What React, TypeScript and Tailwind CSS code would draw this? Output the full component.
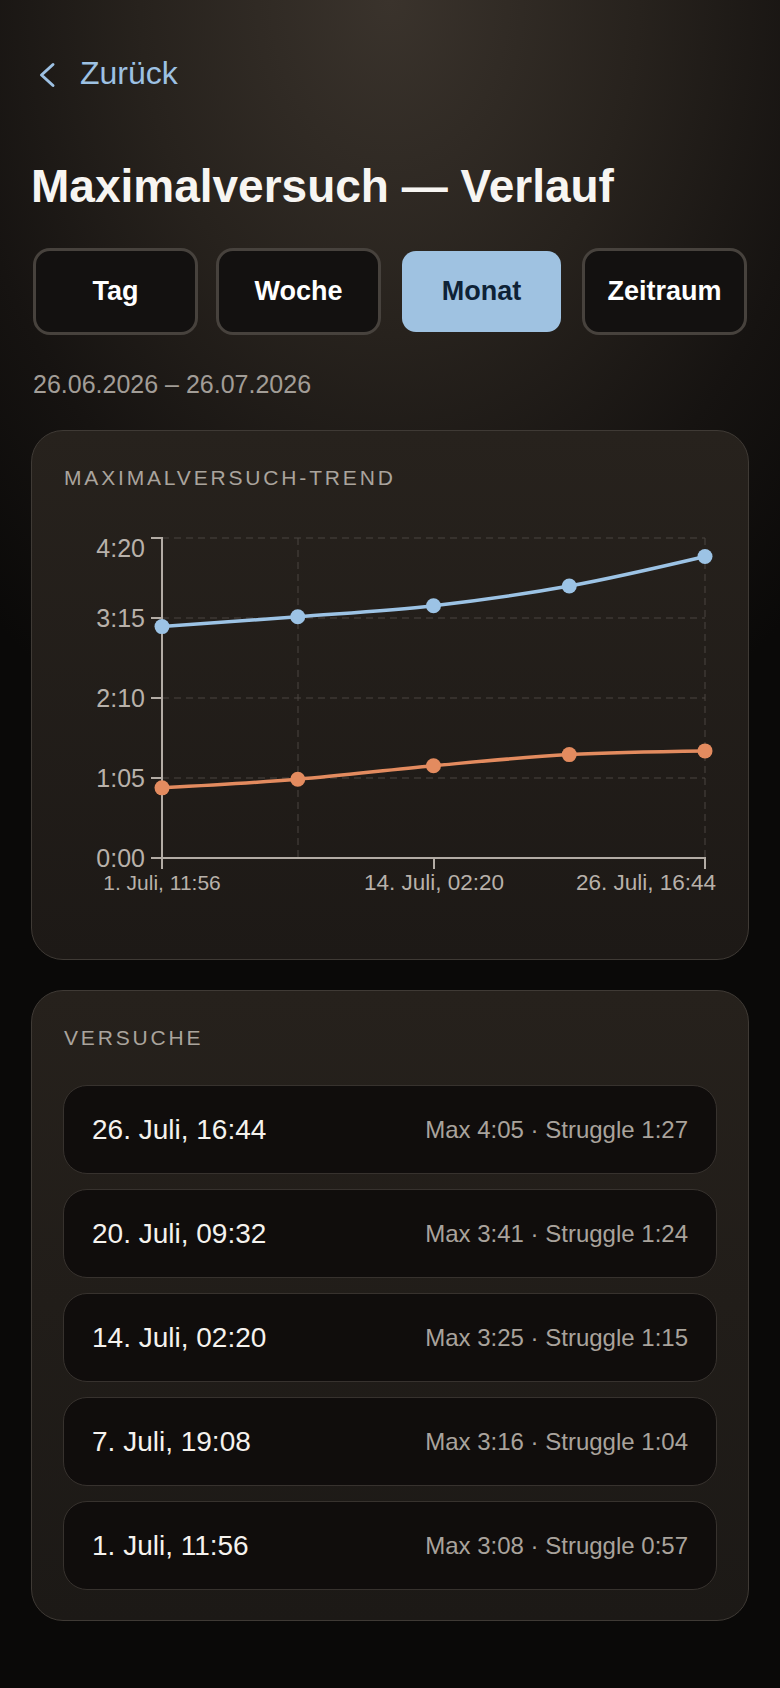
import React from "react";

type Pt = [number, number];

function monotonePath(pts: Pt[]): string {
  const n = pts.length;
  if (n < 2) return "";
  const sign = (v: number) => (v < 0 ? -1 : 1);
  const t: number[] = new Array(n).fill(0);
  for (let i = 1; i < n - 1; i++) {
    const [x0, y0] = pts[i - 1];
    const [x1, y1] = pts[i];
    const [x2, y2] = pts[i + 1];
    const h0 = x1 - x0;
    const h1 = x2 - x1;
    const s0 = (y1 - y0) / h0;
    const s1 = (y2 - y1) / h1;
    const p = (s0 * h1 + s1 * h0) / (h0 + h1);
    t[i] = (sign(s0) + sign(s1)) * Math.min(Math.abs(s0), Math.abs(s1), 0.5 * Math.abs(p)) || 0;
  }
  {
    const [x0, y0] = pts[0];
    const [x1, y1] = pts[1];
    const h = x1 - x0;
    t[0] = n > 2 ? (3 * (y1 - y0) / h - t[1]) / 2 : (y1 - y0) / h;
    const [xa, ya] = pts[n - 2];
    const [xb, yb] = pts[n - 1];
    const hh = xb - xa;
    t[n - 1] = n > 2 ? (3 * (yb - ya) / hh - t[n - 2]) / 2 : (yb - ya) / hh;
  }
  let d = `M${pts[0][0]},${pts[0][1]}`;
  for (let i = 0; i < n - 1; i++) {
    const [x0, y0] = pts[i];
    const [x1, y1] = pts[i + 1];
    const dx = (x1 - x0) / 3;
    d += `C${x0 + dx},${y0 + dx * t[i]},${x1 - dx},${y1 - dx * t[i + 1]},${x1},${y1}`;
  }
  return d;
}

const maxVals = [188, 196, 205, 221, 245];
const strVals = [57, 64, 75, 84, 87];
const xOf = (i: number) => 130 + i * 135.75;
const yOf = (v: number) => 358 - v * (320 / 260);

const rows = [
  { d: "26. Juli, 16:44", m: "Max 4:05 · Struggle 1:27" },
  { d: "20. Juli, 09:32", m: "Max 3:41 · Struggle 1:24" },
  { d: "14. Juli, 02:20", m: "Max 3:25 · Struggle 1:15" },
  { d: "7. Juli, 19:08", m: "Max 3:16 · Struggle 1:04" },
  { d: "1. Juli, 11:56", m: "Max 3:08 · Struggle 0:57" },
];

const FONT = "'Liberation Sans', Arial, sans-serif";

function Chart() {
  const bluePts: Pt[] = maxVals.map((v, i) => [xOf(i), yOf(v)]);
  const orangePts: Pt[] = strVals.map((v, i) => [xOf(i), yOf(v)]);
  const gridY = [38, 118, 198, 278];
  const yLabels: { t: string; y: number }[] = [
    { t: "4:20", y: 57 },
    { t: "3:15", y: 127 },
    { t: "2:10", y: 207 },
    { t: "1:05", y: 287 },
    { t: "0:00", y: 367 },
  ];
  const axis = "#b3aca5";
  const grid = "#4b4540";
  const label = "#b8b1aa";
  return (
    <svg width="716" height="410" viewBox="0 0 716 410" className="block">
      {gridY.map((y) => (
        <line key={y} x1={130} x2={673} y1={y} y2={y} stroke={grid} strokeWidth={1} strokeDasharray="7 5" />
      ))}
      {[266, 673].map((x) => (
        <line key={x} x1={x} x2={x} y1={38} y2={358} stroke={grid} strokeWidth={1} strokeDasharray="7 5" />
      ))}
      <line x1={130} x2={130} y1={37} y2={359} stroke={axis} strokeWidth={2} />
      <line x1={129} x2={674} y1={358} y2={358} stroke={axis} strokeWidth={2} />
      {[38, 118, 198, 278, 358].map((y) => (
        <line key={y} x1={119} x2={130} y1={y} y2={y} stroke={axis} strokeWidth={2} />
      ))}
      {[130, 402, 673].map((x) => (
        <line key={x} x1={x} x2={x} y1={358} y2={369} stroke={axis} strokeWidth={2} />
      ))}
      {yLabels.map((l) => (
        <text key={l.t} x={113} y={l.y} textAnchor="end" fill={label} fontSize={25} fontFamily={FONT}>
          {l.t}
        </text>
      ))}
      <text x={130} y={390} textAnchor="middle" fill={label} fontSize={21} fontFamily={FONT}>
        1. Juli, 11:56
      </text>
      <text x={402} y={390} textAnchor="middle" fill={label} fontSize={22.5} fontFamily={FONT}>
        14. Juli, 02:20
      </text>
      <text x={684} y={390} textAnchor="end" fill={label} fontSize={22.5} fontFamily={FONT}>
        26. Juli, 16:44
      </text>
      <path d={monotonePath(bluePts)} fill="none" stroke="#9cc3e5" strokeWidth={3.5} strokeLinecap="round" />
      <path d={monotonePath(orangePts)} fill="none" stroke="#e38b5f" strokeWidth={3.5} strokeLinecap="round" />
      {bluePts.map(([x, y], i) => (
        <circle key={"b" + i} cx={x} cy={y} r={7.5} fill="#9cc3e5" />
      ))}
      {orangePts.map(([x, y], i) => (
        <circle key={"o" + i} cx={x} cy={y} r={7.5} fill="#e38b5f" />
      ))}
    </svg>
  );
}

export default function App() {
  const tabs = ["Tag", "Woche", "Monat", "Zeitraum"];
  return (
    <div className="min-h-[1688px] w-[780px] bg-[#0a0908] bg-[radial-gradient(ellipse_100%_62%_at_50%_0%,#3a332c_0%,#27221d_32%,#161311_56%,#0a0908_78%)] font-['Liberation_Sans',Arial,sans-serif] px-[31px] pb-[60px]">
      {/* Back */}
      <div className="flex items-start pt-[55px] h-[92px]">
        <svg width="18" height="26" viewBox="0 0 18 26" className="mt-[7px] ml-[7px] shrink-0">
          <polyline points="15,2.5 3.5,13 15,23.5" fill="none" stroke="#9dc1e3" strokeWidth={3} strokeLinecap="round" strokeLinejoin="round" />
        </svg>
        <span className="ml-[24px] text-[32px] leading-[36px] text-[#9dc1e3]">Zurück</span>
      </div>

      {/* Title */}
      <h1 className="mt-[66px] text-[46px] leading-[56px] font-bold tracking-[0px] text-[#f7f5f2]">
        Maximalversuch — Verlauf
      </h1>

      {/* Tabs */}
      <div className="mt-[34px] px-[2px] grid grid-cols-4 gap-[18px]">
        {tabs.map((t) =>
          t === "Monat" ? (
            <div
              key={t}
              className="h-[87px] rounded-[17px] border-[3px] border-transparent bg-clip-padding bg-[#9fc2e1] flex items-center justify-center text-[27px] font-bold text-[#0e2236]"
            >
              {t}
            </div>
          ) : (
            <div
              key={t}
              className="h-[87px] rounded-[17px] border-[3px] border-[#47423d] bg-[#131110] flex items-center justify-center text-[27px] font-bold text-white"
            >
              {t}
            </div>
          )
        )}
      </div>

      {/* Date range */}
      <div className="mt-[33px] ml-[2px] text-[25px] leading-[32px] text-[#a29d97]">26.06.2026 – 26.07.2026</div>

      {/* Chart card */}
      <div className="mt-[30px] rounded-[32px] border border-[#3f3a35] bg-gradient-to-b from-[#27221d] to-[#1d1916] pt-[33px] pb-[49px]">
        <div className="px-[32px] text-[21px] leading-[28px] font-medium tracking-[0.135em] text-[#aaa49d]">
          MAXIMALVERSUCH-TREND
        </div>
        <div className="mt-[8px]">
          <Chart />
        </div>
      </div>

      {/* List card */}
      <div className="mt-[30px] rounded-[32px] border border-[#3f3a35] bg-gradient-to-b from-[#26211c] to-[#1c1916] pt-[33px] pb-[30px] px-[31px]">
        <div className="px-[1px] text-[21px] leading-[28px] font-medium tracking-[0.135em] text-[#aaa49d]">VERSUCHE</div>
        <div className="mt-[33px] flex flex-col gap-[15px]">
          {rows.map((r) => (
            <div
              key={r.d}
              className="h-[89px] rounded-[24px] border border-[#37322e] bg-[#100d0c] pl-[28px] pr-[28px] flex items-center justify-between"
            >
              <span className="text-[28px] text-[#f5f2ee]">{r.d}</span>
              <span className="text-[24px] text-[#a9a39c]">{r.m}</span>
            </div>
          ))}
        </div>
      </div>
    </div>
  );
}
